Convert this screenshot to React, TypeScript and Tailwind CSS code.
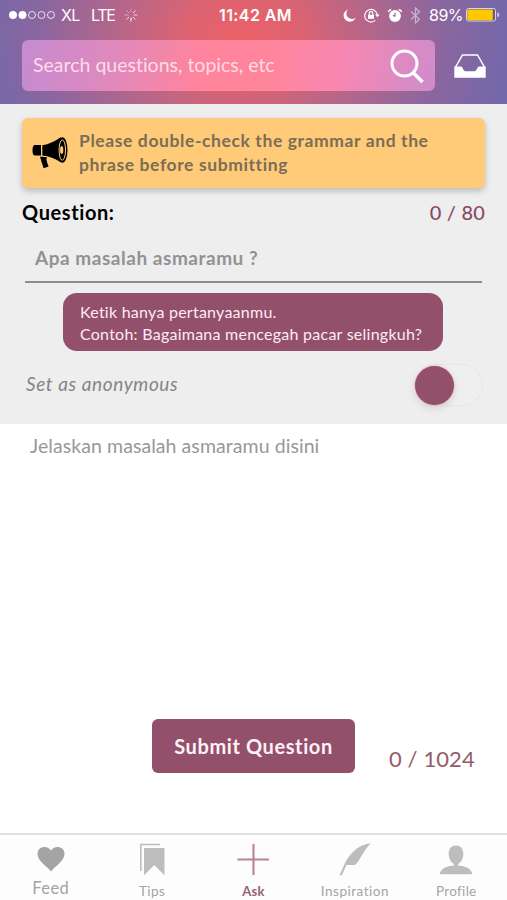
import { useState } from "react";
import type { ReactNode } from "react";

function StatusBar() {
  return (
    <div className="flex h-[30px] items-center font-['Inter',sans-serif] text-white">
      <div className="flex w-[219px] items-center pl-[9px]">
        <svg width="47" height="10" viewBox="0 0 47 10" fill="none" stroke="white" strokeWidth="0.8">
          <circle cx="4" cy="5" r="3.7" fill="white" />
          <circle cx="13.5" cy="5" r="3.7" fill="white" />
          <circle cx="23" cy="5" r="3.5" />
          <circle cx="32.5" cy="5" r="3.5" />
          <circle cx="42" cy="5" r="3.5" />
        </svg>
        <span className="ml-[5px] w-[30px] text-[16px] tracking-[-0.6px]">XL</span>
        <span className="w-[33px] text-[16px] tracking-[-1.3px]">LTE</span>
        <svg width="14" height="14" viewBox="0 0 14 14" stroke="white" strokeWidth="1" strokeLinecap="round">
          <path d="M7 1v3" opacity="0.3" />
          <path d="M11.2 2.8 9.2 4.8" opacity="0.8" />
          <path d="M13 7h-3" opacity="0.7" />
          <path d="m11.2 11.2-2-2" opacity="0.8" />
          <path d="M7 13v-3" />
          <path d="m2.8 11.2 2-2" opacity="0.8" />
          <path d="M1 7h3" opacity="0.5" />
          <path d="m2.8 2.8 2 2" opacity="0.4" />
        </svg>
      </div>
      <span className="w-[124px] whitespace-nowrap text-[16px] font-semibold tracking-[0.4px]">11:42 AM</span>
      <svg width="13" height="13" viewBox="0 0 13 13" fill="white">
        <path d="M5 .5A6.2 6.2 0 1 0 12.7 8.4 5 5 0 0 1 5 .5Z" />
      </svg>
      <svg className="ml-[7px]" width="18" height="15" viewBox="0 0 18 15" fill="none" stroke="white" strokeWidth="1.2">
        <path d="M12.3 12.4A6.3 6.3 0 1 1 14.3 7" />
        <path d="m12 6.5 2.3 2.8 2.4-2.8Z" fill="white" stroke="none" />
        <path d="M6.2 7V5.4a1.8 1.8 0 0 1 3.6 0V7" />
        <rect x="5" y="6.8" width="6" height="4" fill="white" stroke="none" />
      </svg>
      <svg className="ml-[6px]" width="16" height="15" viewBox="0 0 16 15" fill="none">
        <circle cx="8" cy="8" r="5.9" fill="white" />
        <path d="M1.3 4a4 4 0 0 1 3-2.6M11.700 1.400A4 4 0 0 1 14.700 4" stroke="white" strokeWidth="1.5" />
        <path d="M8 8.6V4.7M8 8.6 6 7.2" stroke="#9b6290" strokeWidth="1.2" />
      </svg>
      <svg className="ml-[7px] opacity-50" width="11" height="17" viewBox="0 0 11 17" fill="none" stroke="white" strokeWidth="1.2">
        <path d="m1 4.5 8.500 7.700-4 3.800V1l4 3.800L1 12.500" />
      </svg>
      <span className="ml-[8px] w-[37px] whitespace-nowrap text-[16px] tracking-[-0.5px]">89%</span>
      <svg width="34" height="14" viewBox="0 0 34 14">
        <rect x="0.5" y="0.5" width="29" height="12.5" rx="2" fill="#665b83" stroke="#ddd5e5" />
        <rect x="1.3" y="1.4" width="25.5" height="10.8" rx="1" fill="#ffc800" />
        <path d="M31.3 4.3v5q2-1 2-2.5t-2-2.5Z" fill="#ddd5e5" />
      </svg>
    </div>
  );
}

function Header() {
  return (
    <header className="h-[104px] bg-[radial-gradient(ellipse_290px_230px_at_242px_38px,#ec6168_0%,#dc6371_20%,#b4668a_44%,#8a669f_70%,#6c68ae_100%)]">
      <StatusBar />
      <div className="flex items-center pt-[10px] pl-[22px]">
        <label className="flex h-[51px] w-[413px] items-center rounded-[6px] bg-[linear-gradient(100deg,#c58bd1_0%,#df89bd_22%,#ff849d_43%,#ff859b_60%,#f887b1_76%,#d88bc5_94%,#cf8cca_100%)] pr-[10px] pl-[11px]">
          <input
            className="min-w-0 flex-1 pb-px text-[19.5px] text-white/85 outline-none placeholder:text-[#ffdbe8]"
            placeholder="Search questions, topics, etc"
          />
          <svg width="36" height="36" viewBox="0 0 36 36" fill="none" stroke="white">
            <circle cx="15.5" cy="15.5" r="12.5" strokeWidth="3" />
            <path d="m24 24.500 9.500 9.500" strokeWidth="3.6" />
          </svg>
        </label>
        <svg className="ml-[18px]" width="34" height="28" viewBox="0 0 34 28">
          <path d="M2.3 15.5 9.5 3h15l7.200 12.500" fill="none" stroke="white" strokeWidth="1.5" />
          <path d="M1.3 14.5h6.700c2 0 2 4.800 4.500 4.800h9c2.500 0 2.500-4.800 4.500-4.800h6.700v11.200H1.300Z" fill="white" />
        </svg>
      </div>
    </header>
  );
}

function Megaphone() {
  return (
    <svg width="36" height="32" viewBox="0 0 36 32">
      <path d="M10.3 8.2C17 7.5 23 4 29 .3v25.200c-6-4-12-6.300-18.700-7Z" />
      <ellipse cx="30.5" cy="13" rx="5" ry="12.8" />
      <ellipse cx="30.3" cy="13" rx="3.2" ry="10.2" fill="none" stroke="#ffcc79" strokeWidth="1" />
      <ellipse cx="29.7" cy="13" rx="1.6" ry="4" fill="#ffcc79" />
      <path d="M9 8H3Q.5 8 .5 13.2T3 18.5h6Z" />
      <path d="M8 19.7c2.500-.2 5 0 7 .6-1 2-.5 3.600 1.600 9.200l-5 1.800c-1.400-4-2.400-8-3.600-11.600Z" />
    </svg>
  );
}

function Toggle({ on, onChange }: { on: boolean; onChange: () => void }) {
  return (
    <button
      role="switch"
      aria-checked={on}
      onClick={onChange}
      className={`flex h-[42px] w-[68px] items-center rounded-full border border-[#e7e7e7] bg-[#efefef] ${on ? "justify-end" : "justify-start"}`}
    >
      <span className="-ml-px size-[39px] rounded-full bg-[#93506a] shadow-[0_3px_8px_rgba(0,0,0,0.12),0_0_2px_#ff9dbc]" />
    </button>
  );
}

const tabs: { label: string; icon: ReactNode; active?: boolean; className: string }[] = [
  {
    label: "Feed",
    className: "-mt-[3px] text-[16.5px] tracking-[0.4px]",
    icon: (
      <svg width="28" height="26" viewBox="0 0 28 26" fill="#a4a4a4">
        <path d="M14 25.5C11 21 .5 15.5.5 7.8.5.5 10-1.3 14 4.5 18-1.3 27.5.5 27.5 7.8 27.5 15.5 17 21 14 25.5Z" />
      </svg>
    ),
  },
  {
    label: "Tips",
    className: "text-[13.5px] tracking-[0.4px]",
    icon: (
      <svg width="26" height="33" viewBox="0 0 26 33" fill="#bdbdbd">
        <path d="M5 5h20.5v27.2L15.3 22 5 32.2Z" />
        <path d="M1.8 28V1.500H21" fill="none" stroke="#bdbdbd" strokeWidth="1.6" />
      </svg>
    ),
  },
  {
    label: "Ask",
    active: true,
    className: "text-[13px] tracking-[0.3px] font-bold",
    icon: (
      <svg width="32" height="33" viewBox="0 0 32 33" stroke="#b98390" strokeWidth="2.1">
        <path d="M16.5 1v31M.5 16.5h32" />
      </svg>
    ),
  },
  {
    label: "Inspiration",
    className: "text-[13.5px] tracking-[0.5px]",
    icon: (
      <svg width="32" height="33" viewBox="0 0 32 33" fill="#bdbdbd">
        <path d="M31.5.5C21 1 11.5 9 6 20L.5 32.300h2.300l4.700-10.300h8.500C20.500 18.500 24 8 31.500.5Z" />
      </svg>
    ),
  },
  {
    label: "Profile",
    className: "text-[13.5px] tracking-[0.3px]",
    icon: (
      <svg width="34" height="33" viewBox="0 0 34 33" fill="#bdbdbd">
        <path d="M17 2.500c-4.600 0-7.300 3.300-7.300 8.200 0 5 2.300 8.700 5.300 10.300v1.500C7.500 22.800 1.800 25.500.7 31.200h32.600C32.200 25.500 26.500 22.800 19 22.500V21c3-1.600 5.300-5.300 5.300-10.300 0-4.900-2.700-8.200-7.300-8.200Z" />
      </svg>
    ),
  },
];

export default function App() {
  const [question, setQuestion] = useState("");
  const [detail, setDetail] = useState("");
  const [anonymous, setAnonymous] = useState(false);

  return (
    <div className="flex h-[900px] w-[507px] flex-col overflow-hidden bg-white font-['Lato',sans-serif] [font-variant-ligatures:none]">
      <Header />

      <section className="h-[320px] bg-[#eeeeee] px-[22px] pt-[14px]">
        <div className="flex h-[70px] items-center rounded-[6px] bg-[#ffcb78] pl-[10px] shadow-[0_3px_6px_rgba(0,0,0,0.22)]">
          <Megaphone />
          <p className="ml-[11px] text-[17.5px] leading-[24px] font-bold tracking-[0.6px] text-[#7b6d56]">
            Please double-check the grammar and the
            <br />
            phrase before submitting
          </p>
        </div>

        <div className="flex h-[49px] items-center justify-between pb-[2px] text-[20px]">
          <h2 className="font-bold tracking-[0.6px] text-black">Question:</h2>
          <span className="font-medium tracking-[0.2px] text-[#8b4964]">{question.length} / 80</span>
        </div>

        <input
          className="mx-[3px] block h-[46px] w-[457px] border-b-2 border-[#8e8e90] pb-[4px] pl-[10px] text-[19px] font-bold tracking-[0.53px] outline-none placeholder:text-[#929294]"
          placeholder="Apa masalah asmaramu ?"
          maxLength={80}
          value={question}
          onChange={(e) => setQuestion(e.target.value)}
        />

        <div className="mt-[10px] ml-[41px] h-[58px] w-[380px] rounded-[14px] bg-[#93506a] pt-[8px] pl-[17px] text-[16px] leading-[22px] tracking-[0.25px] text-[#ffeaf3]">
          Ketik hanya pertanyaanmu.
          <br />
          Contoh: Bagaimana mencegah pacar selingkuh?
        </div>

        <div className="mt-[13px] flex items-center justify-between pr-[2px] pl-[4px]">
          <span className="pb-[2px] text-[19px] tracking-[0.6px] text-[#858585] italic">Set as anonymous</span>
          <Toggle on={anonymous} onChange={() => setAnonymous(!anonymous)} />
        </div>
      </section>

      <textarea
        className="block h-[295px] resize-none px-[30px] pt-[7px] text-[19.5px] tracking-[0.07px] outline-none placeholder:text-[#989898]"
        placeholder="Jelaskan masalah asmaramu disini"
        maxLength={1024}
        value={detail}
        onChange={(e) => setDetail(e.target.value)}
      />

      <div className="flex h-[114px] items-start pl-[152px]">
        <button className="h-[54px] w-[203px] rounded-[6px] bg-[#93506a] text-[20px] font-bold tracking-[0.6px] text-[#fff2f7]">
          Submit Question
        </button>
        <span className="mt-[23px] ml-[34px] text-[22px] tracking-[0.1px] text-[#935c69]">{detail.length} / 1024</span>
      </div>

      <nav className="grid h-[67px] grid-cols-5 border-t-2 border-[#e0e0e0] bg-[#fdfdfd]">
        {tabs.map((tab) => (
          <button key={tab.label} className="flex flex-col items-center">
            <span className="flex h-[48px] items-center">{tab.icon}</span>
            <span className={`${tab.className} leading-[16px] ${tab.active ? "text-[#936272]" : "text-[#a4a4a4]"}`}>
              {tab.label}
            </span>
          </button>
        ))}
      </nav>
    </div>
  );
}
